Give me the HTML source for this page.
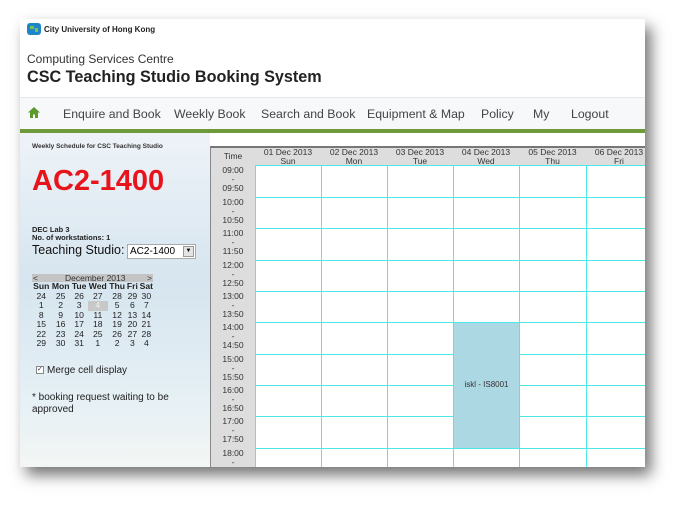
<!DOCTYPE html>
<html><head><meta charset="utf-8"><style>
*{margin:0;padding:0;box-sizing:border-box}
body{width:687px;height:509px;background:#fff;position:relative;overflow:hidden;font-family:"Liberation Sans",Arial,sans-serif}
#p{position:absolute;left:20px;top:19px;width:625px;height:448px;background:#fff;box-shadow:6px 8px 14px rgba(0,0,0,.55);overflow:hidden}
.a{position:absolute}
#nav{left:0;top:78px;width:625px;height:33px;background:#f7f8fa;border-top:1px solid #e6e8ec}
#nav span{position:absolute;top:9px;color:#444;font-size:12.3px}
#gb{left:0;top:110px;width:625px;height:4px;background:#6f9a3a}
#lp{left:0;top:114px;width:190px;height:334px;background:linear-gradient(#eef3f8,#d6e5ef 45%,#e6f0f5 80%,#f3f6f4)}
#tb{left:190px;top:127px;width:435px;height:321px;background:#fff;border-top:2px solid #777;border-left:1px solid #888}
.hd{position:absolute;top:0;height:17px;background:#ddd;font-size:8.5px;color:#333;text-align:center;line-height:8.5px;padding-top:0}
.tm{position:absolute;left:0;width:44px;background:#ddd;font-size:8.5px;color:#333;text-align:center;line-height:9px}
.cl{position:absolute;border-left:1px solid #4ee8ea;border-top:1px solid #4ee8ea}
.cal td{font-size:8.6px;color:#222;text-align:center;padding:0;line-height:9.5px}
</style></head><body>
<div id="p">
 <svg class="a" style="left:7px;top:3px" width="14" height="14" viewBox="0 0 14 14"><rect x="0" y="1" width="14" height="12" rx="3" fill="#1c86c8"/><path d="M3 4h4v3H3zM8 6h3v4H8z" fill="#7cc24a"/></svg>
 <div class="a" style="left:24px;top:6px;font-size:8px;font-weight:bold;color:#222">City University of Hong Kong</div>
 <div class="a" style="left:7px;top:33px;font-size:12px;color:#333">Computing Services Centre</div>
 <div class="a" style="left:7px;top:49px;font-size:16.2px;font-weight:bold;color:#222">CSC Teaching Studio Booking System</div>
 <div id="nav" class="a">
  <svg class="a" style="left:8px;top:9px" width="12" height="11" viewBox="0 0 12 11"><path d="M6 0L0 5.5h2V11h3V7.5h2V11h3V5.5h2z" fill="#5c9a2c"/></svg>
  <span style="left:43px">Enquire and Book</span><span style="left:154px">Weekly Book</span><span style="left:241px">Search and Book</span><span style="left:347px">Equipment &amp; Map</span><span style="left:461px">Policy</span><span style="left:513px">My</span><span style="left:551px">Logout</span>
 </div>
 <div id="gb" class="a"></div>
 <div id="lp" class="a">
  <div class="a" style="left:12px;top:10px;font-size:6.5px;font-weight:bold;color:#333">Weekly Schedule for CSC Teaching Studio</div>
  <div class="a" style="left:12px;top:32px;font-size:29px;font-weight:bold;color:#e8141c">AC2-1400</div>
  <div class="a" style="left:12px;top:93px;font-size:7.5px;font-weight:bold;color:#222;line-height:8px">DEC Lab 3<br>No. of workstations: 1</div>
  <div class="a" style="left:12px;top:110px;font-size:12.5px;color:#111">Teaching Studio:</div>
  <div class="a" style="left:107px;top:111px;width:69px;height:15px;background:#fff;border:1px solid #aaa;font-size:10px;padding:1px 2px">AC2-1400<span style="position:absolute;right:1px;top:1px;width:11px;height:11px;background:#e4e4e4;border:1px solid #999;font-size:6px;text-align:center;line-height:9px">▼</span></div>
  <div class="a" style="left:12px;top:141px;width:121px;height:8px;background:#c4c4c4;font-size:8.5px;line-height:8px;color:#333"><span style="position:absolute;left:1px">&lt;</span><span style="position:absolute;left:33px">December 2013</span><span style="position:absolute;right:1px">&gt;</span></div>
  <table class="cal a" style="left:12px;top:149px;border-collapse:collapse;width:122px">
   <tr><td><b>Sun</b></td><td><b>Mon</b></td><td><b>Tue</b></td><td><b>Wed</b></td><td><b>Thu</b></td><td><b>Fri</b></td><td><b>Sat</b></td></tr>
   <tr><td>24</td><td>25</td><td>26</td><td>27</td><td>28</td><td>29</td><td>30</td></tr>
   <tr><td>1</td><td>2</td><td>3</td><td style="background:#c8c8c8;color:#eee">4</td><td>5</td><td>6</td><td>7</td></tr>
   <tr><td>8</td><td>9</td><td>10</td><td>11</td><td>12</td><td>13</td><td>14</td></tr>
   <tr><td>15</td><td>16</td><td>17</td><td>18</td><td>19</td><td>20</td><td>21</td></tr>
   <tr><td>22</td><td>23</td><td>24</td><td>25</td><td>26</td><td>27</td><td>28</td></tr>
   <tr><td>29</td><td>30</td><td>31</td><td>1</td><td>2</td><td>3</td><td>4</td></tr>
  </table>
  <div class="a" style="left:16px;top:233px;width:8px;height:8px;border:1px solid #888;background:#fff;font-size:7px;line-height:6px;color:#335">✓</div>
  <div class="a" style="left:27px;top:232px;font-size:10px;color:#222">Merge cell display</div>
  <div class="a" style="left:12px;top:259px;font-size:10px;color:#222;line-height:12px">* booking request waiting to be<br>approved</div>
 </div>
 <div id="tb" class="a">
  <div class="hd" style="left:0;width:44px;padding-top:4px">Time</div>
  <div class="hd" style="left:44px;width:66px">01 Dec 2013<br>Sun</div>
  <div class="hd" style="left:110px;width:66px">02 Dec 2013<br>Mon</div>
  <div class="hd" style="left:176px;width:66px">03 Dec 2013<br>Tue</div>
  <div class="hd" style="left:242px;width:66px">04 Dec 2013<br>Wed</div>
  <div class="hd" style="left:308px;width:67px">05 Dec 2013<br>Thu</div>
  <div class="hd" style="left:375px;width:66px">06 Dec 2013<br>Fri</div>
  <div class="tm" style="top:17px;height:304px"></div>
  <div id="g"></div>
 </div>
</div>
<script>
var g=document.getElementById('g'),xs=[44,110,176,242,308,375,441],h='';
var ys=[17,49,80,112,143,174,206,237,268,300,331];
for(var r=0;r<10;r++){var t=9+r;var s=(t<10?'0':'')+t;
 h+='<div class="tm" style="top:'+(ys[r]+1)+'px;height:30px">'+s+':00<br>-<br>'+s+':50</div>';
 for(var c=0;c<6;c++){if(c==3&&r>=5&&r<=8){if(r==5)h+='<div class="cl" style="left:'+xs[c]+'px;top:'+ys[r]+'px;width:'+(xs[c+1]-xs[c]+1)+'px;height:'+(ys[9]-ys[5]+1)+'px;background:#acd8e4;border-right:1px solid #4ee8ea;border-bottom:1px solid #4ee8ea;font-size:8px;color:#333;text-align:center;line-height:'+(ys[9]-ys[5]-2)+'px">iskl - IS8001</div>';continue;}
 h+='<div class="cl" style="left:'+xs[c]+'px;top:'+ys[r]+'px;width:'+(xs[c+1]-xs[c])+'px;height:'+(ys[r+1]-ys[r])+'px"></div>';}}
g.innerHTML=h;
</script>
</body></html>
